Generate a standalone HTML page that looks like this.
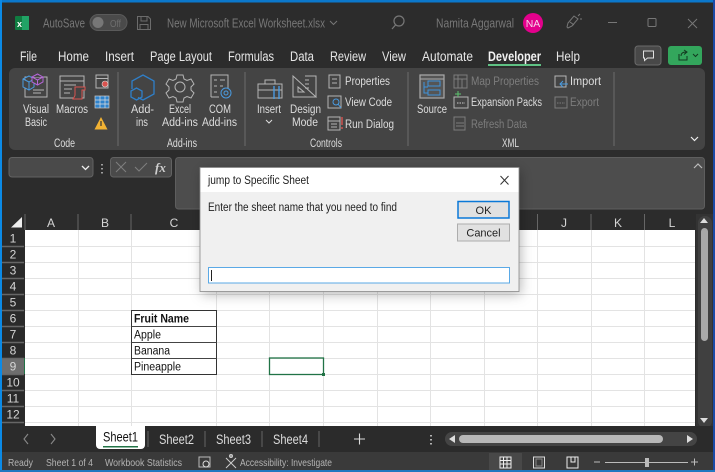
<!DOCTYPE html>
<html><head><meta charset="utf-8"><style>
html,body{margin:0;padding:0;width:715px;height:472px;overflow:hidden;background:#2b2b2b}
svg{display:block;font-family:"Liberation Sans",sans-serif;filter:blur(.3px)}
.r text{font-size:11.5px;fill:#ddd}
.d{fill:#7d7d7d!important}
.tb text{font-size:13.5px;fill:#e6e6e6}
.ti text{font-size:13px;fill:#787878}
.st text{font-size:10.5px;fill:#b4b4b4}
.ic{fill:none;stroke:#b5b5b5;stroke-width:1}
.h text{font-size:12px;fill:#d5d5d5;text-anchor:middle}
.c text{font-size:11.5px;fill:#111}
.grid path{stroke:#e3e3e3;stroke-width:1;fill:none}
</style></head><body>
<svg width="715" height="472" viewBox="0 0 715 472" xmlns="http://www.w3.org/2000/svg">
<rect width="715" height="472" fill="#2c2c2c"/>
<!-- window border -->
<rect width="715" height="2.500" fill="#0b78cc"/>
<rect width="2" height="472" fill="#0b8ae6"/>
<rect x="713" width="2" height="472" fill="#1b4aa6"/>
<rect y="470" width="715" height="2" fill="#1f78c0"/>

<!-- title bar -->
<g>
<rect x="15" y="16" width="14" height="14" rx="1" fill="#107c41"/><rect x="22" y="16" width="7" height="14" fill="#21a366"/>
<text x="17" y="27" font-size="9" font-weight="bold" fill="#fff">x</text>
</g>
<g class="ti">
<text x="43" y="27.500" textLength="42" lengthAdjust="spacingAndGlyphs">AutoSave</text>
<text x="167" y="27.500" textLength="158" lengthAdjust="spacingAndGlyphs">New Microsoft Excel Worksheet.xlsx</text>
<text x="436" y="27.500" textLength="78" lengthAdjust="spacingAndGlyphs">Namita Aggarwal</text>
</g>
<rect x="90" y="14.500" width="37" height="16" rx="8" fill="#4a4a4a" stroke="#5a5a5a"/>
<text x="110" y="27" textLength="11" lengthAdjust="spacingAndGlyphs" font-size="10.500" fill="#6e6e6e">Off</text>
<circle cx="98" cy="22.500" r="5.500" fill="#777"/>
<path class="ic" style="stroke:#6c6c6c" d="M137.500 16.500H148l2.500 2.500V29.500H137.500ZM141 16.500V21H147V16.500M140 29.500V24.500H148V29.500"/>
<path class="ic" style="stroke:#777" d="M685 0" />
<path class="ic" style="stroke:#777" d="M685 0" />
<path class="ic" style="stroke:#777" d="M330 21l3.500 3.500L337 21"/>
<circle class="ic" style="stroke:#777;stroke-width:1.200" cx="399" cy="21" r="5"/><path class="ic" style="stroke:#777;stroke-width:1.200" d="M395.500 25L392 29"/>
<circle cx="533" cy="23" r="10" fill="#e3008c"/>
<text x="533" y="27" font-size="10.500" fill="#f6d5ea" text-anchor="middle">NA</text>
<path class="ic" style="stroke:#777" d="M567 27l1-4 6-7 4 3-6 7-4 2zM570 22l4 3M578 16l2-2M580 19h2"/>
<path class="ic" style="stroke:#777" d="M608 22.500h9"/>
<rect class="ic" style="stroke:#777" x="648" y="18.500" width="8" height="8" rx="1"/>
<path class="ic" style="stroke:#777" d="M688 19l9 9M697 19l-9 9"/>

<!-- tabs -->
<g class="tb">
<text x="20" y="61" textLength="17" lengthAdjust="spacingAndGlyphs">File</text>
<text x="58" y="61" textLength="31" lengthAdjust="spacingAndGlyphs">Home</text>
<text x="105" y="61" textLength="29" lengthAdjust="spacingAndGlyphs">Insert</text>
<text x="150" y="61" textLength="62" lengthAdjust="spacingAndGlyphs">Page Layout</text>
<text x="228" y="61" textLength="46" lengthAdjust="spacingAndGlyphs">Formulas</text>
<text x="290" y="61" textLength="24" lengthAdjust="spacingAndGlyphs">Data</text>
<text x="330" y="61" textLength="36" lengthAdjust="spacingAndGlyphs">Review</text>
<text x="382" y="61" textLength="24" lengthAdjust="spacingAndGlyphs">View</text>
<text x="422" y="61" textLength="51" lengthAdjust="spacingAndGlyphs">Automate</text>
<text x="488" y="61" textLength="53" lengthAdjust="spacingAndGlyphs" font-weight="bold" style="fill:#f2f2f2">Developer</text>
<text x="556" y="61" textLength="24" lengthAdjust="spacingAndGlyphs">Help</text>
</g>
<rect x="488" y="64" width="53" height="2" fill="#5fc184"/>
<rect x="635" y="46" width="26" height="19" rx="3" fill="#484848" stroke="#6a6a6a"/>
<path class="ic" style="stroke:#e0e0e0" d="M643.500 51h10v7h-6l-3 2.500V58h-1z"/>
<rect x="668" y="46" width="34" height="19" rx="3" fill="#33a65c"/>
<path fill="none" stroke="#12381f" stroke-width="1" d="M679 54v6h8v-4M681 56c0-3 2-4 5-4M684 50l3 2-3 2.500M693 54l2.500 2.500L698 54"/>

<!-- ribbon -->
<rect x="9" y="68" width="696" height="82" rx="6" fill="#444"/>
<path d="M118 72v74M245 72v74M408 72v74M614 72v74" stroke="#666" stroke-width="1.200"/>
<g class="r">
<text x="23" y="113" textLength="26" lengthAdjust="spacingAndGlyphs">Visual</text>
<text x="25" y="126" textLength="22" lengthAdjust="spacingAndGlyphs">Basic</text>
<text x="56" y="113" textLength="32" lengthAdjust="spacingAndGlyphs">Macros</text>
<text x="54" y="147" textLength="21" lengthAdjust="spacingAndGlyphs">Code</text>
<text x="131" y="113" textLength="23" lengthAdjust="spacingAndGlyphs">Add-</text>
<text x="136" y="126" textLength="12" lengthAdjust="spacingAndGlyphs">ins</text>
<text x="169" y="113" textLength="22" lengthAdjust="spacingAndGlyphs">Excel</text>
<text x="162" y="126" textLength="36" lengthAdjust="spacingAndGlyphs">Add-ins</text>
<text x="209" y="113" textLength="22" lengthAdjust="spacingAndGlyphs">COM</text>
<text x="202" y="126" textLength="35" lengthAdjust="spacingAndGlyphs">Add-ins</text>
<text x="167" y="147" textLength="30" lengthAdjust="spacingAndGlyphs">Add-ins</text>
<text x="257" y="113" textLength="24" lengthAdjust="spacingAndGlyphs">Insert</text>
<text x="290" y="113" textLength="31" lengthAdjust="spacingAndGlyphs">Design</text>
<text x="292" y="126" textLength="26" lengthAdjust="spacingAndGlyphs">Mode</text>
<text x="345" y="85" textLength="45" lengthAdjust="spacingAndGlyphs">Properties</text>
<text x="345" y="106" textLength="47" lengthAdjust="spacingAndGlyphs">View Code</text>
<text x="345" y="128" textLength="49" lengthAdjust="spacingAndGlyphs">Run Dialog</text>
<text x="310" y="147" textLength="32" lengthAdjust="spacingAndGlyphs">Controls</text>
<text x="417" y="113" textLength="30" lengthAdjust="spacingAndGlyphs">Source</text>
<text class="d" x="471" y="85" textLength="68" lengthAdjust="spacingAndGlyphs">Map Properties</text>
<text x="471" y="106" textLength="71" lengthAdjust="spacingAndGlyphs">Expansion Packs</text>
<text class="d" x="471" y="128" textLength="56" lengthAdjust="spacingAndGlyphs">Refresh Data</text>
<text x="570" y="85" textLength="31" lengthAdjust="spacingAndGlyphs">Import</text>
<text class="d" x="570" y="106" textLength="29" lengthAdjust="spacingAndGlyphs">Export</text>
<text x="502" y="147" textLength="17" lengthAdjust="spacingAndGlyphs">XML</text>
</g>
<!-- ribbon icons -->
<rect class="ic" x="25" y="77" width="22" height="20"/><path class="ic" d="M33 90h11M33 93h8"/>
<path fill="#444" stroke="#4a9be0" d="M23 79l6-3 5 3v8l-5 3-6-3zM23 79l6 3 5-3M29 82v8"/>
<path fill="#444" stroke="#b565d8" d="M32 77l5.500-3 5.500 3v5l-5.500 3-5.500-3zM32 77l5.500 3 5.500-3M37.500 80v5"/>
<rect class="ic" x="60" y="76" width="24" height="22"/><path class="ic" d="M60 81h24M64 85h12M64 89h8M64 93h6"/>
<path fill="#444" stroke="#d9534f" d="M75 87h10v3h-3v9h-9c1-2 2-3 2-4z"/>
<rect class="ic" x="96" y="75" width="12" height="13"/><path class="ic" d="M96 78.500h12"/><circle cx="105" cy="84" r="3" fill="#d9534f" stroke="#ddd" stroke-width=".6"/>
<rect x="95" y="96" width="14" height="12" fill="#2f83cc" stroke="#ccc" stroke-width=".7"/><path d="M95 100h14M95 104h14M100 96v12M105 96v12" stroke="#ddd" stroke-width=".7"/>
<path d="M101 117l6.500 12.500h-13z" fill="#f2b233"/><path d="M101 121v5" stroke="#333" stroke-width="1.200"/>
<path fill="none" stroke="#2f7fc8" stroke-width="1.300" d="M132 89V81l11-6 11 6v13l-11 6-5-2.500"/>
<path fill="none" stroke="#2f7fc8" stroke-width="1.300" d="M131 91l5.500-3 5.500 3v6l-5.500 3-5.500-3z"/>
<circle class="ic" cx="180" cy="87" r="5"/>
<path class="ic" d="M177 75h6l1 4 3 1.500 4-1.500 3 5-3 3v3l3 3-3 5-4-1.500-3 1.500-1 4h-6l-1-4-3-1.500-4 1.500-3-5 3-3v-3l-3-3 3-5 4 1.500 3-1.500z"/>
<path class="ic" d="M211 97V75h17v13M211 97h8M214 80h3M220 80h5M214 86h3M220 86h3M214 92h3"/>
<circle fill="none" stroke="#4a9be0" cx="226" cy="93" r="5"/><circle fill="none" stroke="#4a9be0" cx="226" cy="93" r="2"/>
<path class="ic" d="M258 84h24v14h-24zM258 90h24M265 84v-4h10v4"/>
<path fill="none" stroke="#4a9be0" stroke-width="1.400" d="M274 86v13M279 86v13"/>
<path class="ic" d="M293 76v21h23zM298 87v5h6zM305 76h11v21M305 80h4M305 84h4M305 88h4"/>
<path d="M266 120l3 3 3-3" fill="none" stroke="#ddd"/>
<rect class="ic" x="329" y="75" width="11" height="13"/><path class="ic" d="M332 79h5M332 83h5"/>
<rect class="ic" x="328" y="96" width="13" height="12"/><circle fill="none" stroke="#4a9be0" cx="336" cy="102" r="3"/><path stroke="#4a9be0" d="M338 104l3 4"/>
<rect class="ic" x="328" y="117" width="12" height="13"/><path class="ic" d="M328 121h12M331 124h6M331 127h6"/><path stroke="#d9534f" stroke-width="1.400" d="M342 117v8M342 127v2"/>
<rect fill="#555" stroke="#aaa" stroke-width="1.200" x="420" y="75" width="24" height="23"/><path stroke="#aaa" d="M420 79h24"/>
<path fill="none" stroke="#3e94dc" d="M424 82v11h4M424 87h4M428 81h12v5h-12zM428 90h12v5h-12z"/>
<g class="ic" style="stroke:#7d7d7d"><rect x="454" y="75" width="13" height="13"/><path d="M454 79h13M458 75v13M462 79v9"/><rect x="454" y="117" width="11" height="13"/><path d="M456 123h8M456 126h8"/></g>
<rect class="ic" x="454" y="97" width="14" height="11"/><path d="M455 94h6M458 91v6" stroke="#5cc46e"/><path d="M457 103h8" stroke="#ccc" stroke-dasharray="1.500 1"/>
<rect class="ic" x="555" y="76" width="11" height="11"/><path d="M560 84h8M563 81l-3 3 3 3" stroke="#4a9be0" fill="none"/>
<rect class="ic" style="stroke:#7d7d7d" x="555" y="97" width="12" height="11"/><path d="M557 103h8" stroke="#7d7d7d" stroke-dasharray="1.500 1"/>
<path d="M691 137l3.500 3.500 3.500-3.500" fill="none" stroke="#eee" stroke-width="1.200"/>

<!-- formula bar -->
<rect x="9" y="157.500" width="84" height="19.500" rx="3" fill="#4a4a4a" stroke="#626262"/>
<path d="M82 166l3.500 3.500L89 166" fill="none" stroke="#eee" stroke-width="1.300"/>
<path d="M102 164v1.500M102 168v1.500M102 172v1.500" stroke="#bbb" stroke-width="1.600"/>
<rect x="110.500" y="157.500" width="61" height="19.500" rx="3" fill="#4a4a4a" stroke="#626262"/>
<path d="M116 162l10 10M126 162l-10 10M135 167l4 4 8-8" fill="none" stroke="#7f7f7f"/>
<text x="155" y="172" font-family="Liberation Serif" font-style="italic" font-weight="bold" font-size="13" fill="#cfcfcf">fx</text>
<rect x="175.500" y="157.500" width="529" height="51.500" rx="3" fill="#4d4d4d" stroke="#5e5e5e"/>
<path d="M694 168l4-4 4 4" fill="none" stroke="#bbb" stroke-width="1.200"/>

<!-- headers -->
<rect x="2" y="214" width="693" height="16" fill="#2c2c2c"/>
<path d="M22 217v10.500H11z" fill="#eee"/>
<path d="M25 214v16M78 214v16M131 214v16M537.500 214v16M591 214v16M644.500 214v16" stroke="#666"/>
<g class="h">
<text x="51" y="227">A</text><text x="105" y="227">B</text><text x="174" y="227">C</text>
<text x="564" y="227">J</text><text x="618" y="227">K</text><text x="672" y="227">L</text>
</g>
<!-- sheet -->
<rect x="25" y="230" width="670" height="196" fill="#fff"/>
<g class="grid"><path d="M25 246.500H695M25 262.500H695M25 278.500H695M25 294.500H695M25 310.500H695M25 326.500H695M25 342.500H695M25 358.500H695M25 374.500H695M25 390.500H695M25 406.500H695M25 422.500H695"/>
<path d="M78.500 230V426M131.500 230V426M216.500 230V426M269.500 230V426M323.500 230V426M377.500 230V426M430.500 230V426M484.500 230V426M537.500 230V426M591.500 230V426M644.500 230V426"/></g>
<!-- row headers -->
<rect x="2" y="230" width="22.500" height="196" fill="#2a2a2a"/>
<rect x="2" y="358" width="22.500" height="16" fill="#6e6e6e"/>
<rect x="24" y="358" width="1" height="16" fill="#217346"/>
<path d="M2 246.500H24M2 262.500H24M2 278.500H24M2 294.500H24M2 310.500H24M2 326.500H24M2 342.500H24M2 358.500H24M2 374.500H24M2 390.500H24M2 406.500H24M2 422.500H24" stroke="#666" stroke-width="1.400"/>
<g class="h">
<text x="13" y="242.500">1</text><text x="13" y="258.500">2</text><text x="13" y="274.500">3</text><text x="13" y="290.500">4</text><text x="13" y="306.500">5</text><text x="13" y="322.500">6</text><text x="13" y="338.500">7</text><text x="13" y="354.500">8</text><text x="13" y="370.500">9</text><text x="13" y="386.500">10</text><text x="13" y="402.500">11</text><text x="13" y="418.500">12</text>
</g>
<!-- table -->
<rect x="131.500" y="310.500" width="85" height="64" fill="#fff" stroke="#333"/>
<path d="M131.500 326.500h85M131.500 342.500h85M131.500 358.500h85" stroke="#444"/>
<g class="c">
<text x="134" y="322.500" textLength="55" lengthAdjust="spacingAndGlyphs" font-weight="bold">Fruit Name</text>
<text x="134" y="338.500" textLength="27" lengthAdjust="spacingAndGlyphs">Apple</text>
<text x="134" y="354.500" textLength="36" lengthAdjust="spacingAndGlyphs">Banana</text>
<text x="134" y="370.500" textLength="47" lengthAdjust="spacingAndGlyphs">Pineapple</text>
</g>
<rect x="269.500" y="358" width="54" height="16.500" fill="none" stroke="#217346" stroke-width="1.300"/>
<rect x="322" y="373" width="3" height="3" fill="#217346"/>

<!-- v scroll -->
<rect x="696" y="214" width="17" height="214" fill="#333"/>
<rect x="698" y="216" width="14" height="212" rx="7" fill="#404040"/>
<path d="M704 218l4 5h-8z" fill="#ddd"/><path d="M704 423l4-5h-8z" fill="#ddd"/>
<rect x="701" y="228" width="7" height="113" rx="3.500" fill="#a8a8a8"/>

<!-- sheet tabs -->
<rect x="2" y="426" width="711" height="26" fill="#2b2b2b"/>
<path d="M96 426h49v19a4 4 0 0 1-4 4h-41a4 4 0 0 1-4-4z" fill="#fff"/>
<text x="103" y="441.500" font-size="13.500" fill="#111" textLength="35" lengthAdjust="spacingAndGlyphs">Sheet1</text>
<rect x="103" y="446" width="35" height="1.500" fill="#217346"/>
<g font-size="13.500" fill="#dcdcdc">
<text x="159" y="444" textLength="35" lengthAdjust="spacingAndGlyphs">Sheet2</text>
<text x="216" y="444" textLength="35" lengthAdjust="spacingAndGlyphs">Sheet3</text>
<text x="273" y="444" textLength="35" lengthAdjust="spacingAndGlyphs">Sheet4</text>
</g>
<path d="M148 431v16M205 431v16M262 431v16M319 431v16" stroke="#666"/>
<path d="M28 434l-4 5 4 5M51 434l4 5-4 5" fill="none" stroke="#888" stroke-width="1.100"/>
<path d="M354 439h11M359.500 433.500v11" stroke="#ddd" stroke-width="1.100"/>
<path d="M431 435v1.500M431 439v1.500M431 443v1.500" stroke="#ccc" stroke-width="1.700"/>
<rect x="445" y="432" width="252" height="14" rx="7" fill="#444"/>
<rect x="459" y="435" width="204" height="8" rx="4" fill="#b8b8b8"/>
<path d="M449 439l6-4v8zM693 439l-6-4v8z" fill="#ddd"/>

<!-- status bar -->
<rect x="2" y="452" width="711" height="18" fill="#3a3a3a"/>
<rect x="489" y="453" width="33" height="17" fill="#484848"/>
<g class="st">
<text x="8" y="466" textLength="25" lengthAdjust="spacingAndGlyphs">Ready</text>
<text x="46" y="466" textLength="47" lengthAdjust="spacingAndGlyphs">Sheet 1 of 4</text>
<text x="105" y="466" textLength="77" lengthAdjust="spacingAndGlyphs">Workbook Statistics</text>
<text x="240" y="466" textLength="92" lengthAdjust="spacingAndGlyphs">Accessibility: Investigate</text>
</g>
<rect x="199" y="457" width="11" height="10" fill="none" stroke="#bbb"/><circle cx="206" cy="464" r="3" fill="#3a3a3a" stroke="#ddd"/>
<path d="M226 458l10 10M236 458l-10 10M231 455v3" stroke="#ccc" fill="none"/><circle cx="231" cy="456" r="1.500" fill="none" stroke="#ccc"/>
<path d="M500 457h11v11h-11zM500 460.500h11M500 464h11M503.500 457v11M507 457v11" fill="none" stroke="#eee"/>
<rect x="533.500" y="457" width="11" height="11" fill="none" stroke="#ddd"/><rect x="536" y="459" width="6" height="7" fill="none" stroke="#888"/>
<path d="M567 457h11v11h-11zM571 457v5h4v-5" fill="none" stroke="#eee"/>
<path d="M594 462h6M605 462.500h83M691 462h7M694.500 458.500v7" stroke="#bbb" fill="none"/>
<rect x="645" y="458" width="4" height="9" fill="#bbb"/>

<!-- dialog -->
<defs><filter id="s" x="-10%" y="-15%" width="120%" height="135%"><feDropShadow dx="2" dy="3" stdDeviation="6" flood-color="#000" flood-opacity=".28"/></filter></defs>
<rect x="200" y="167.500" width="319" height="124" fill="#f0f0f0" filter="url(#s)"/>
<rect x="200" y="167.500" width="319" height="24.500" fill="#fff"/>
<rect x="200" y="167.500" width="319" height="124" fill="none" stroke="#8a8a8a" stroke-width=".8"/>
<g font-size="11.500" fill="#222">
<text x="208" y="184" textLength="101" lengthAdjust="spacingAndGlyphs">jump to Specific Sheet</text>
<text x="208" y="211" textLength="189" lengthAdjust="spacingAndGlyphs">Enter the sheet name that you need to find</text>
</g>
<path d="M500.500 176l8 8.500M508.500 176l-8 8.500" stroke="#333" fill="none"/>
<rect x="458" y="201.500" width="51" height="16.500" fill="#e1e1e1" stroke="#0a78d7" stroke-width="1.500"/>
<text x="483.500" y="214" font-size="11" fill="#222" text-anchor="middle">OK</text>
<rect x="457.500" y="224" width="52" height="17" fill="#e1e1e1" stroke="#adadad"/>
<text x="483.500" y="236.500" font-size="11" fill="#222" text-anchor="middle">Cancel</text>
<rect x="208.500" y="267.500" width="301" height="15.500" fill="#fff" stroke="#5aa9e6"/>
<path d="M211.500 270v11" stroke="#222"/>
</svg>
</body></html>
